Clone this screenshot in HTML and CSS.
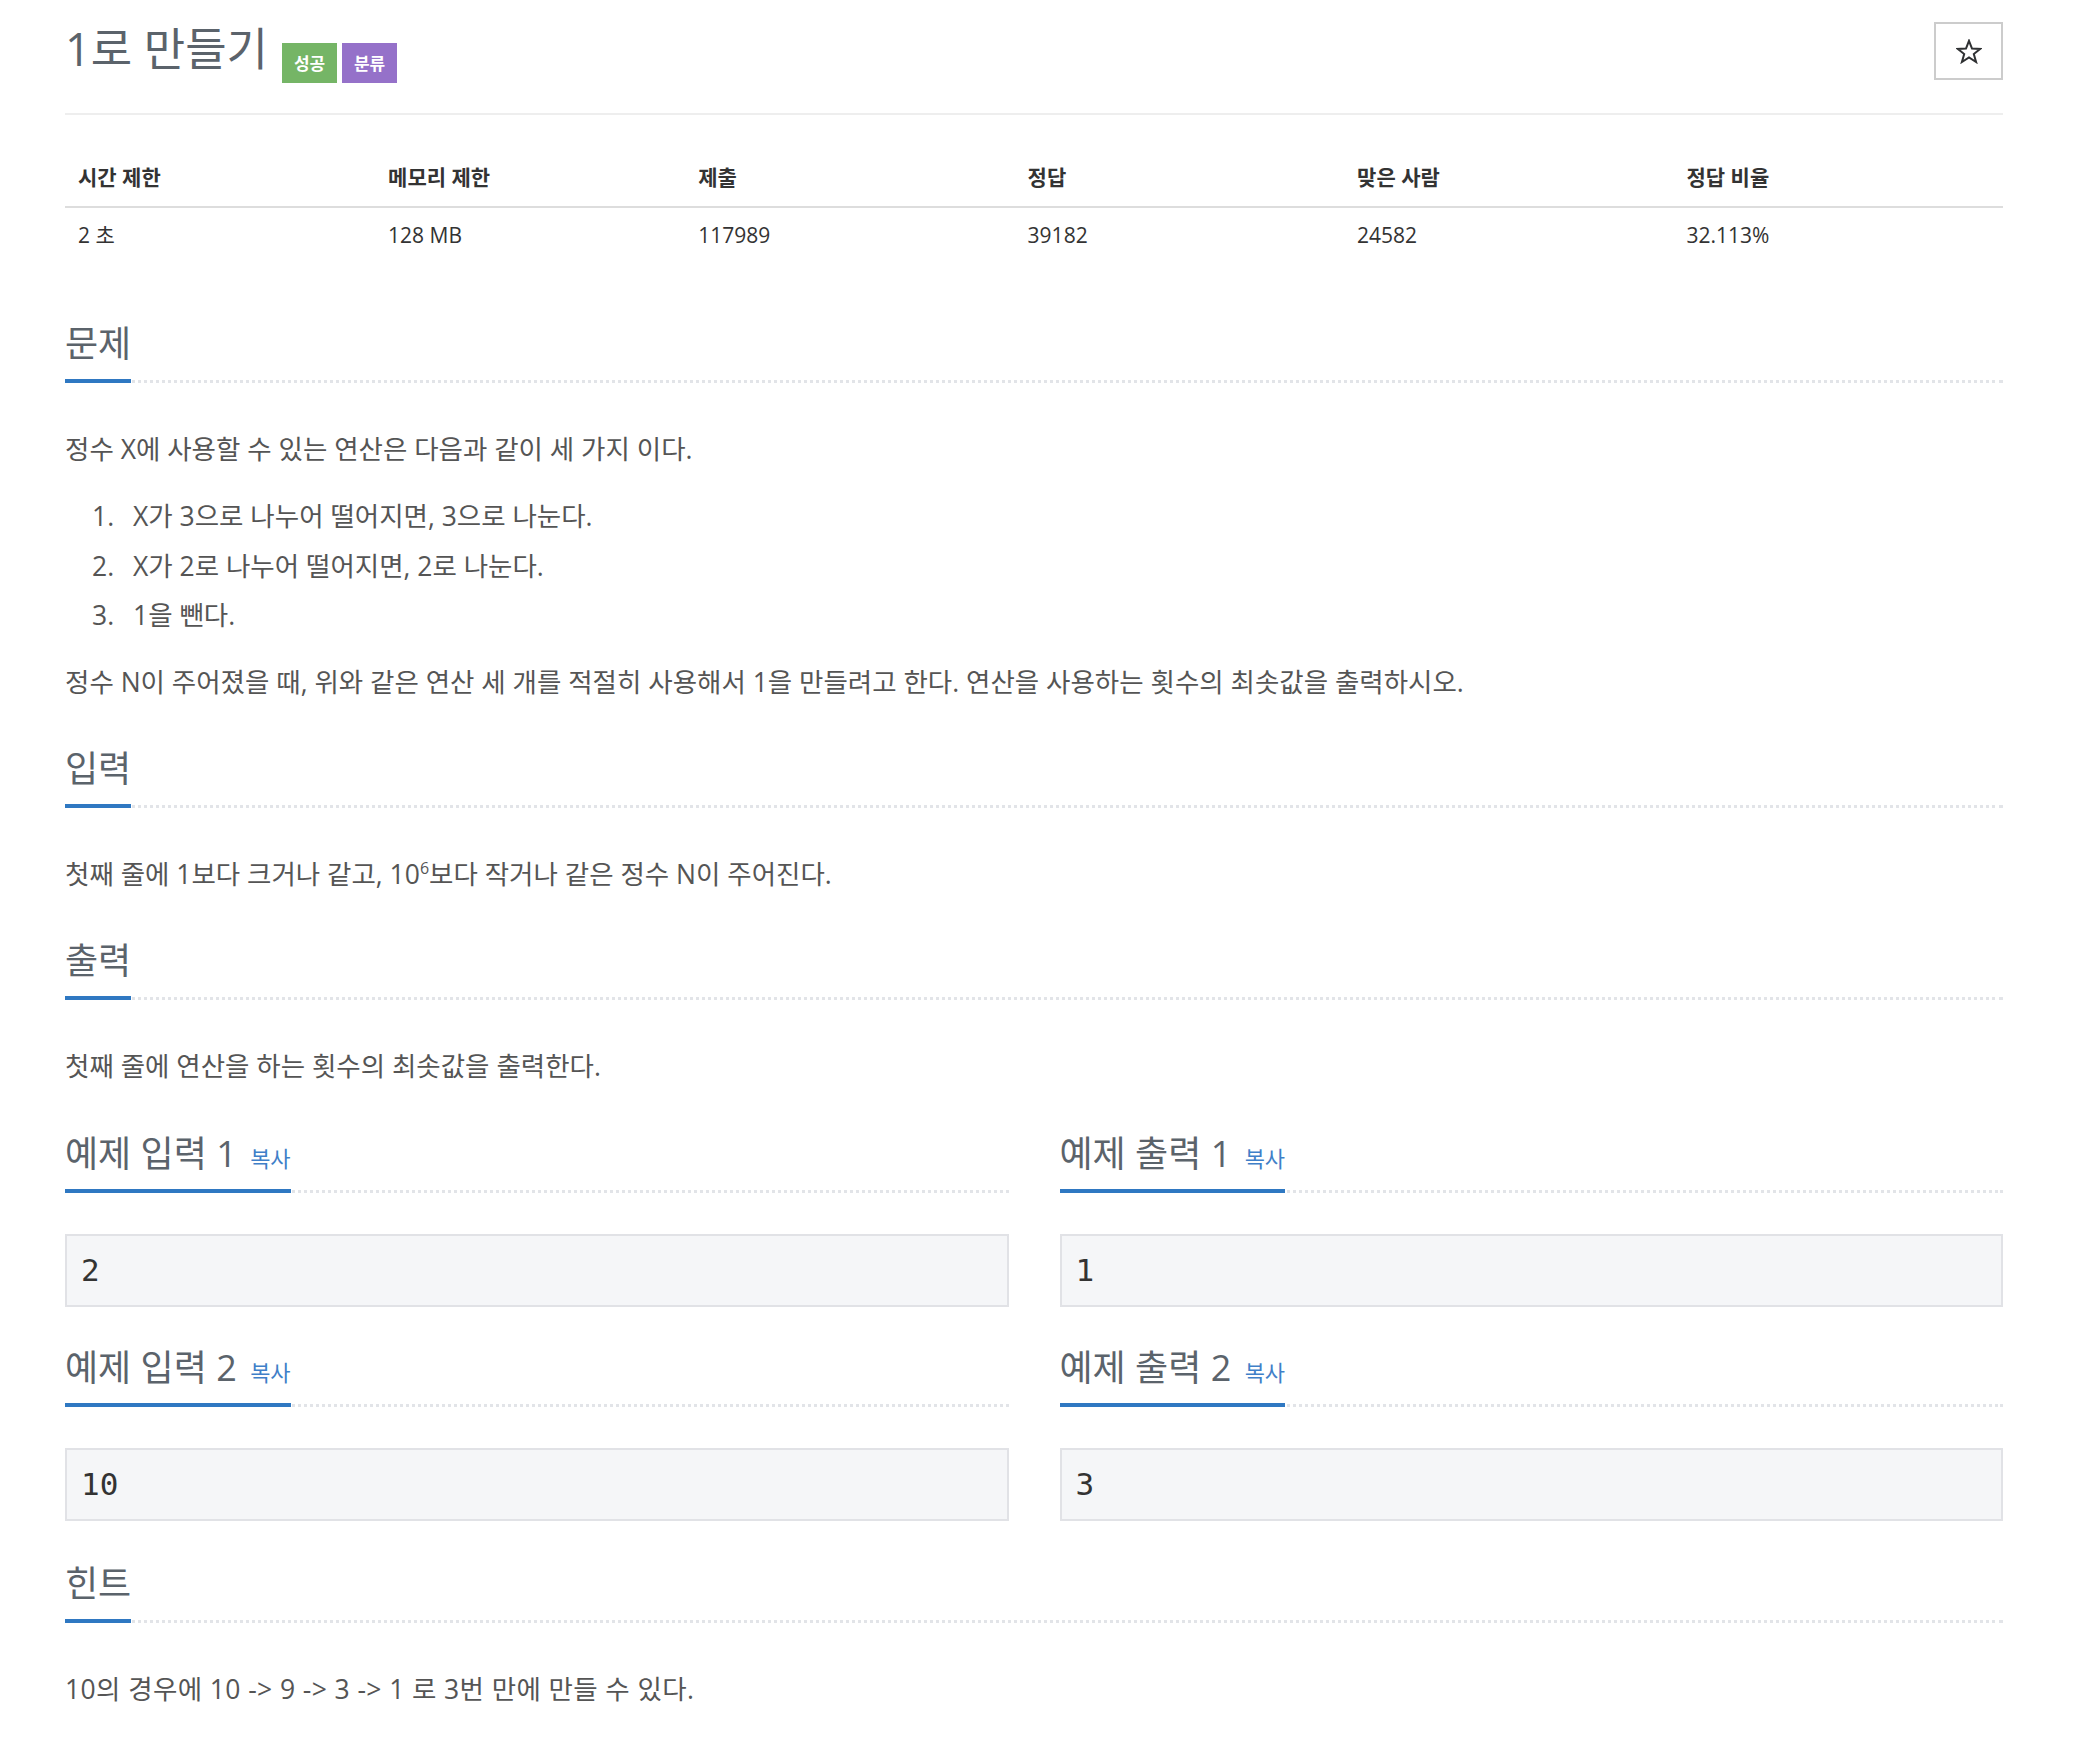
FILE: index.html
```html
<!DOCTYPE html>
<html lang="ko">
<head>
<meta charset="utf-8">
<title>1로 만들기</title>
<link rel="stylesheet" href="styles.css">
</head>
<body>
<div class="page">
  <div class="title-row">
    <h1 class="title">1로 만들기</h1>
    <span class="badge badge-success">성공</span>
    <span class="badge badge-tag">분류</span>
    <button class="star-btn" type="button" aria-label="즐겨찾기">
      <svg width="26" height="25" viewBox="0 0 26 25"><path d="M13 1.8 L16 9.6 L24.3 9.9 L17.8 15 L20.1 23 L13 18.4 L5.9 23 L8.2 15 L1.7 9.9 L10 9.6 Z" fill="none" stroke="#2f3133" stroke-width="2" stroke-linejoin="miter"/></svg>
    </button>
  </div>

  <table class="info">
    <colgroup>
      <col class="c16"><col class="c16"><col class="c17"><col class="c17"><col class="c17"><col class="c17">
    </colgroup>
    <thead>
      <tr><th>시간 제한</th><th>메모리 제한</th><th>제출</th><th>정답</th><th>맞은 사람</th><th>정답 비율</th></tr>
    </thead>
    <tbody>
      <tr><td>2 초</td><td>128 MB</td><td>117989</td><td>39182</td><td>24582</td><td>32.113%</td></tr>
    </tbody>
  </table>

  <section class="sec sec-first">
    <div class="headline"><h2>문제</h2></div>
    <div class="text">
      <p>정수 X에 사용할 수 있는 연산은 다음과 같이 세 가지 이다.</p>
      <ol class="ops">
        <li>X가 3으로 나누어 떨어지면, 3으로 나눈다.</li>
        <li>X가 2로 나누어 떨어지면, 2로 나눈다.</li>
        <li>1을 뺀다.</li>
      </ol>
      <p class="after-list">정수 N이 주어졌을 때, 위와 같은 연산 세 개를 적절히 사용해서 1을 만들려고 한다. 연산을 사용하는 횟수의 최솟값을 출력하시오.</p>
    </div>
  </section>

  <section class="sec">
    <div class="headline"><h2>입력</h2></div>
    <div class="text">
      <p>첫째 줄에 1보다 크거나 같고, 10<sup>6</sup>보다 작거나 같은 정수 N이 주어진다.</p>
    </div>
  </section>

  <section class="sec">
    <div class="headline"><h2>출력</h2></div>
    <div class="text">
      <p>첫째 줄에 연산을 하는 횟수의 최솟값을 출력한다.</p>
    </div>
  </section>

  <div class="samples">
    <section class="sample">
      <div class="headline"><h2>예제 입력 1 <a class="copy" href="#">복사</a></h2></div>
      <pre class="sample-data">2</pre>
    </section>
    <section class="sample">
      <div class="headline"><h2>예제 출력 1 <a class="copy" href="#">복사</a></h2></div>
      <pre class="sample-data">1</pre>
    </section>
    <section class="sample">
      <div class="headline"><h2>예제 입력 2 <a class="copy" href="#">복사</a></h2></div>
      <pre class="sample-data">10</pre>
    </section>
    <section class="sample">
      <div class="headline"><h2>예제 출력 2 <a class="copy" href="#">복사</a></h2></div>
      <pre class="sample-data">3</pre>
    </section>
  </div>

  <section class="sec sec-hint">
    <div class="headline"><h2>힌트</h2></div>
    <div class="text">
      <p class="hint-text">10의 경우에 10 -&gt; 9 -&gt; 3 -&gt; 1 로 3번 만에 만들 수 있다.</p>
    </div>
  </section>
</div>
</body>
</html>
```

FILE: styles.css
```css
html, body {
  margin: 0;
  padding: 0;
  background: #ffffff;
}

body {
  font-family: "Open Sans", "Noto Sans CJK KR", sans-serif;
  color: #555555;
}

.page {
  width: 1938px;
  padding: 0 79px 40px 65px;
}

/* title */
.title-row {
  display: flex;
  align-items: flex-start;
  padding-top: 22px;
  padding-bottom: 30px;
  border-bottom: 2px solid #eeeeee;
}

.title {
  margin: 0;
  font-size: 45px;
  line-height: 54px;
  font-weight: 400;
  color: #5b636b;
}

.badge {
  display: inline-flex;
  align-items: center;
  justify-content: center;
  width: 55px;
  height: 40px;
  margin-top: 21px;
  color: #ffffff;
  font-size: 17px;
  font-weight: 700;
  line-height: 1;
}

.badge-success {
  background: #75b566;
  margin-left: 14px;
}

.badge-tag {
  background: #9571c9;
  margin-left: 5px;
}

.star-btn {
  margin-left: auto;
  width: 69px;
  height: 58px;
  border: 2px solid #cccccc;
  background: #ffffff;
  padding: 0;
  display: flex;
  align-items: center;
  justify-content: center;
}

/* info table */
.info {
  width: 100%;
  margin-top: 33px;
  border-collapse: collapse;
  font-size: 21px;
  line-height: 27px;
  color: #333333;
}

.c16 { width: 16%; }
.c17 { width: 17%; }

.info th {
  text-align: left;
  font-weight: 700;
  padding: 16px 13px 15px;
  border-bottom: 2px solid #dddddd;
}

.info td {
  padding: 14px 13px 12px;
}

/* sections */
.sec {
  margin-top: 46px;
}

.sec-first {
  margin-top: 61px;
}

.sec-hint {
  margin-top: 41px;
}

.headline {
  display: flex;
  border-bottom: 3px dotted #e2e4e8;
}

.headline h2 {
  margin: 0 0 -3px 0;
  font-size: 36px;
  line-height: 44px;
  font-weight: 400;
  color: #5b636b;
  padding-bottom: 13px;
  border-bottom: 4px solid #2f78c2;
}

.copy {
  font-size: 22px;
  line-height: 1;
  color: #3f7fc8;
  text-decoration: none;
  margin-left: 4px;
}

.text {
  margin-top: 47px;
  font-size: 26.5px;
  line-height: 38px;
  color: #555555;
}

.text p {
  margin: 0;
}

.text .hint-text {
  letter-spacing: 0.4px;
}

.text sup {
  font-size: 16px;
  line-height: 0;
  vertical-align: 10px;
}

.ops {
  list-style: none;
  counter-reset: op;
  margin: 29px 0 0 0;
  padding: 0 0 0 27px;
}

.ops li {
  counter-increment: op;
  display: flex;
}

.ops li + li {
  margin-top: 11.5px;
}

.ops li::before {
  content: counter(op) ".";
  width: 41px;
  flex: none;
}

.after-list {
  margin-top: 29px !important;
}

/* samples */
.samples {
  display: grid;
  grid-template-columns: 1fr 1fr;
  column-gap: 51px;
  row-gap: 39px;
  margin-top: 47px;
}

.sample-data {
  margin: 41px 0 0 0;
  height: 69px;
  padding: 0 14px;
  background: #f5f6f8;
  border: 2px solid #e1e2e6;
  font-family: "DejaVu Sans Mono", monospace;
  font-size: 31px;
  line-height: 69px;
  color: #333333;
}
```
